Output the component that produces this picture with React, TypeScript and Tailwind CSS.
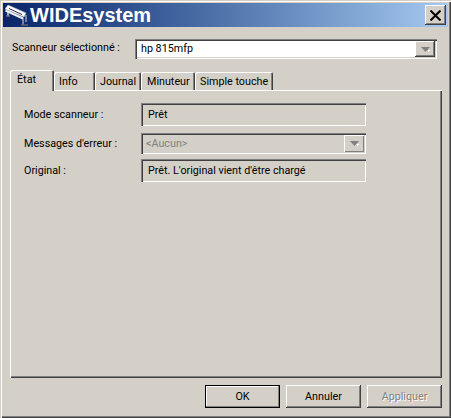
const raised = "shadow-[inset_-1px_-1px_0_#404040,inset_1px_1px_0_#ffffff,inset_-2px_-2px_0_#808080]";
const sunken = "shadow-[inset_1px_1px_0_#808080,inset_2px_2px_0_#404040,inset_-1px_-1px_0_#ffffff,inset_-2px_-2px_0_#d4d0c8]";

function Arrow() {
  return (
    <svg width="9" height="5" viewBox="0 0 9 5" className="block">
      <path d="M0 0h9L4.5 5z" fill="#808080" />
      <path d="M7 3h2v1H8v1H7z" fill="#ffffff" />
    </svg>
  );
}

function Combo({ text, disabled, className }: { text: string; disabled?: boolean; className: string }) {
  return (
    <div className={`flex items-center ${className} ${sunken} ${disabled ? "bg-[#d4d0c8]" : "bg-white"} p-[2px]`}>
      <span className={`flex-1 ${disabled ? "pl-[3px] pt-[1px] text-[#808080]" : "pl-[4px] text-black"}`}>{text}</span>
      <div className={`flex h-full w-[20px] items-center justify-center bg-[#d4d0c8] ${disabled ? "shadow-[inset_1px_1px_0_#ffffff,inset_-1px_-1px_0_#808080]" : raised}`}>
        <Arrow />
      </div>
    </div>
  );
}

function Tab({ label, w, active }: { label: string; w: string; active?: boolean }) {
  return (
    <div
      className={`flex items-center rounded-t-[2px] bg-[#d4d0c8] shadow-[inset_1px_1px_0_#ffffff,inset_-1px_0_0_#404040,inset_-2px_0_0_#808080] ${w} ${
        active ? "relative z-10 -mb-[1px] h-[21px] pb-[1px]" : "h-[18px] pt-[2px]"
      }`}
    >
      {label}
    </div>
  );
}

function Field({ text }: { text: string }) {
  return <div className={`flex h-[23px] w-[225px] items-center pl-[7px] pt-[1px] ${sunken}`}>{text}</div>;
}

function Btn({ label, primary, disabled }: { label: string; primary?: boolean; disabled?: boolean }) {
  return (
    <div
      className={`flex h-[23px] w-[75px] items-center justify-center pt-[1px] ${
        primary ? "shadow-[inset_0_0_0_1px_#000000,inset_-2px_-2px_0_#808080,inset_2px_2px_0_#ffffff]" : raised
      } ${disabled ? "text-[#808080] [text-shadow:1px_1px_0_#ffffff]" : "text-black"}`}
    >
      {label}
    </div>
  );
}

export default function App() {
  return (
    <div className="flex h-[418px] w-[451px] flex-col bg-[#d4d0c8] p-[3px] font-['Roboto',sans-serif] text-[10.75px] text-black shadow-[inset_1px_1px_0_#d4d0c8,inset_2px_2px_0_#ffffff,inset_-1px_-1px_0_#404040,inset_-2px_-2px_0_#808080]">
      <div className="flex h-[24px] items-center justify-between bg-gradient-to-r from-[#0a246a] to-[#a6caf0] pl-[2px] pr-[2px]">
        <div className="flex items-center">
          <svg width="24" height="22" viewBox="0 0 24 22" className="mr-[1px]">
            <path d="M3 8v4" stroke="#a8acb8" strokeWidth="2" />
            <path d="M1 12h4" stroke="#6c7080" strokeWidth="1.5" />
            <path d="M18 14v7M21 11v7" stroke="#9aa0a8" strokeWidth="1.5" />
            <path d="M16 21h7" stroke="#5c6070" strokeWidth="1.5" />
            <path d="M0 5L3 1L21 9L19 13Z" fill="#ffffff" stroke="#b0b4c0" strokeWidth="0.6" />
            <path d="M4 4.5l13 6" stroke="#20284c" strokeWidth="1" />
            <path d="M0.5 6.5L18 14.5" stroke="#f0f0f4" strokeWidth="2" />
          </svg>
          <span className="font-['Liberation_Sans',sans-serif] text-[20px] font-bold leading-none text-white">WIDEsystem</span>
        </div>
        <div className={`flex h-[20px] w-[21px] items-center justify-center bg-[#d4d0c8] ${raised}`}>
          <svg width="11" height="11" viewBox="0 0 11 11">
            <path d="M0.5 0.5l10 10M10.5 0.5l-10 10" stroke="#000000" strokeWidth="2" />
          </svg>
        </div>
      </div>

      <div className="flex flex-1 flex-col px-[7px]">
        <div className="mt-[12px] flex items-center justify-between pr-[4px]">
          <span className="mb-[2px] ml-[2px]">Scanneur sélectionné :</span>
          <Combo text="hp 815mfp" className="h-[20px] w-[302px]" />
        </div>

        <div className="mt-[11px] flex h-[20px] items-end">
          <Tab label="État" w="w-[44px] pl-[7px]" active />
          <Tab label="Info" w="w-[41px] pl-[5px]" />
          <Tab label="Journal" w="w-[46px] pl-[5px]" />
          <Tab label="Minuteur" w="w-[54px] pl-[6px]" />
          <Tab label="Simple touche" w="w-[78px] pl-[5px]" />
        </div>

        <div className="-mr-[1px] flex h-[288px] w-[432px] flex-col pl-[14px] pt-[13px] shadow-[inset_1px_1px_0_#ffffff,inset_-1px_-1px_0_#404040,inset_-2px_-2px_0_#808080]">
          <div className="flex items-center">
            <span className="w-[117px] pt-[2px]">Mode scanneur :</span>
            <Field text="Prêt" />
          </div>
          <div className="mt-[7px] flex items-center">
            <span className="w-[117px] pt-[1px]">Messages d'erreur :</span>
            <Combo text="<Aucun>" disabled className="h-[21px] w-[225px]" />
          </div>
          <div className="mt-[5px] flex items-center">
            <span className="w-[117px] pt-[1px]">Original :</span>
            <Field text="Prêt. L'original vient d'être chargé" />
          </div>
        </div>

        <div className="-mr-[1px] mt-[7px] flex justify-end gap-x-[6px]">
          <Btn label="OK" primary />
          <Btn label="Annuler" />
          <Btn label="Appliquer" disabled />
        </div>
      </div>
    </div>
  );
}
